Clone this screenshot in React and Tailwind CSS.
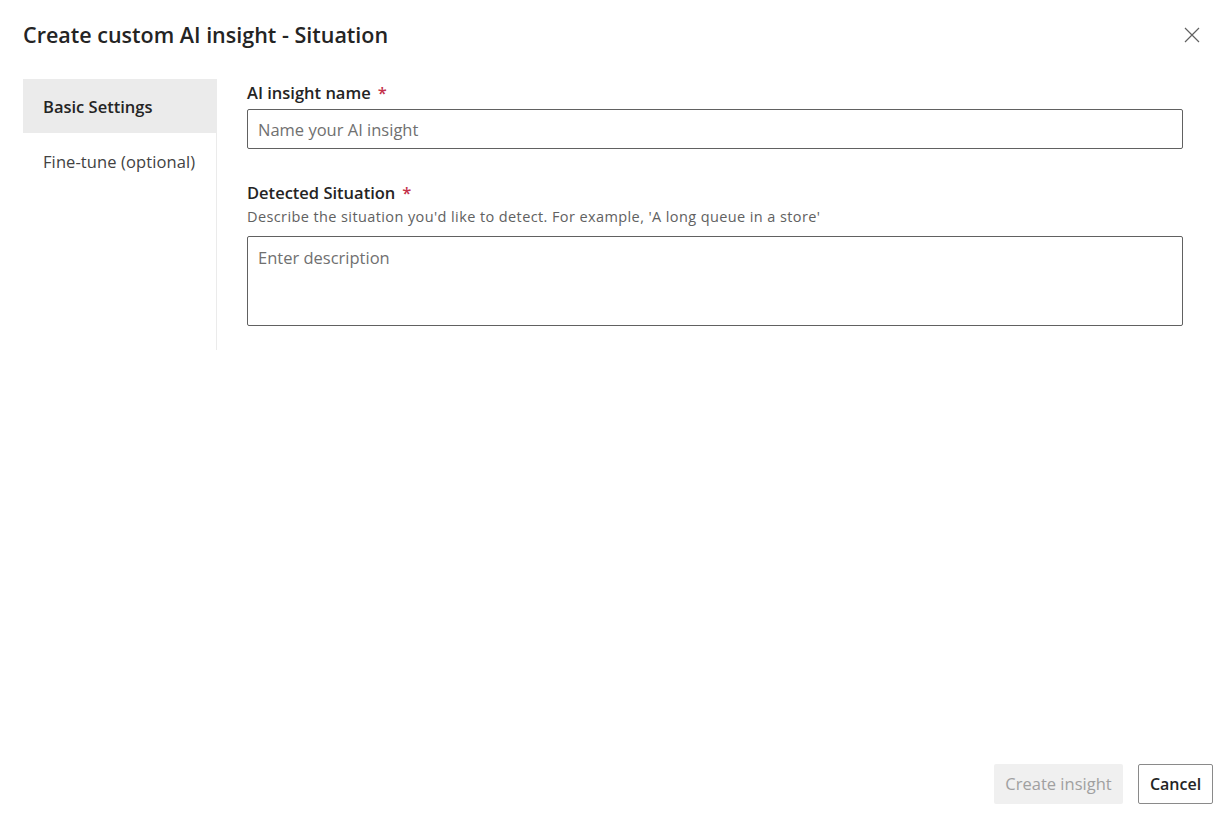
const font = { fontFamily: '"Open Sans", "Noto Sans", sans-serif' };

const Label = ({ children }) => (
  <div className="text-[16.5px] font-semibold text-[#242424] leading-[22px]">
    {children}
    <span className="text-[#c4314b] ml-[7px]">*</span>
  </div>
);

export default function App() {
  return (
    <div className="w-[1222px] h-[821px] bg-white flex flex-col text-[#242424]" style={font}>
      <div className="flex items-center justify-between pl-[23px] pr-[22px] pt-[20px] h-[79px] pb-[29px]">
        <h1 className="text-[21.5px] font-semibold leading-[30px]">Create custom AI insight - Situation</h1>
        <button className="w-[16px] h-[16px] flex items-center justify-center text-[#616161]">
          <svg width="16" height="16" viewBox="0 0 16 16" fill="none" stroke="currentColor" strokeWidth="1.2">
            <path d="M1 1 L15 15 M15 1 L1 15" />
          </svg>
        </button>
      </div>

      <div className="flex flex-1 pl-[23px]">
        <nav className="w-[194px] flex flex-col self-start">
          <div className="h-[54px] bg-[#ebebeb] flex items-center pl-[20px] pt-[2px] text-[16.5px] font-semibold">Basic Settings</div>
          <div className="border-r border-[#ebebeb] h-[217px] pl-[20px] pt-[17px] text-[16.5px] tracking-[0.1px] text-[#424242]">Fine-tune (optional)</div>
        </nav>

        <div className="flex flex-col ml-[30px] w-[936px] pt-[3px]">
          <Label>AI insight name</Label>
          <input
            placeholder="Name your AI insight"
            className="mt-[5px] h-[40px] border border-[#616161] rounded-[2px] px-[10px] text-[16.5px] placeholder-[#707070] outline-none"
            style={font}
          />

          <div className="mt-[33px]">
            <Label>Detected Situation</Label>
          </div>
          <div className="text-[14.5px] text-[#616161] leading-[20px] mt-[3px] tracking-[0.4px]">
            Describe the situation you'd like to detect. For example, 'A long queue in a store'
          </div>
          <textarea
            placeholder="Enter description"
            className="mt-[9px] h-[90px] border border-[#616161] rounded-[2px] px-[10px] pt-[9px] text-[16.5px] placeholder-[#707070] outline-none resize-none"
            style={font}
          />
        </div>
      </div>

      <div className="flex justify-end gap-[15px] pr-[9px] pb-[17px]">
        <button disabled className="h-[40px] w-[129px] rounded-[2px] bg-[#f0f0f0] text-[#a0a0a0] text-[16.5px]" style={font}>
          Create insight
        </button>
        <button className="h-[40px] w-[75px] rounded-[2px] bg-white border border-[#8a8a8a] text-[16px] font-semibold" style={font}>
          Cancel
        </button>
      </div>
    </div>
  );
}
